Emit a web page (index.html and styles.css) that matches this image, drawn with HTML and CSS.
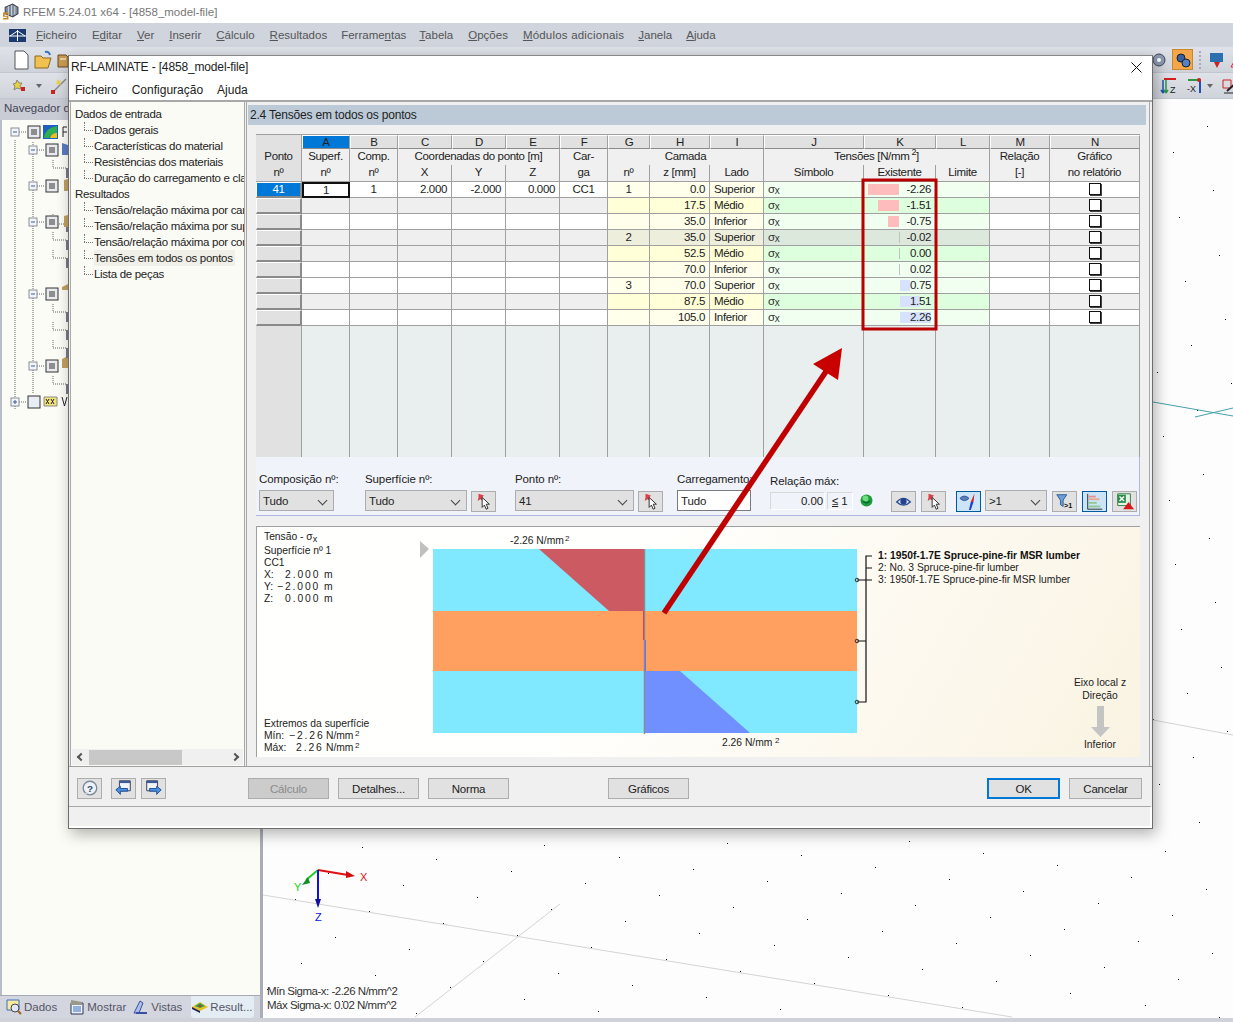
FILE: index.html
```html
<!DOCTYPE html>
<html lang="pt">
<head>
<meta charset="utf-8">
<title>RFEM 5.24.01 x64 - [4858_model-file]</title>
<link rel="stylesheet" href="styles.css">
</head>
<body>
<svg class="defs" width="0" height="0" aria-hidden="true">
  <symbol id="i-pick" viewBox="0 0 25 21">
    <path d="M7 2l6 2-2 2 1 4-3-2-3 2 1-4z" fill="#d8404a"/>
    <path d="M11 6v11l2.500-2.500 2 4.500 2-1-2-4.500h3.500z" fill="#fff" stroke="#222"/>
  </symbol>
  <symbol id="i-eye" viewBox="0 0 25 21">
    <path d="M5 11q7.500-8 15 0q-7.500 7-15 0z" fill="#dfe8f5" stroke="#2a4a90" stroke-width="1.500"/>
    <circle cx="12.500" cy="10.500" r="3.500" fill="#24408e"/>
  </symbol>
  <symbol id="i-eyebar" viewBox="0 0 25 21">
    <path d="M3 7q5-5 10 0q-5 5-10 0z" fill="#5c7fb8" stroke="#2a4a90"/>
    <path d="M19 2l-4 9h3z" fill="#d02020"/><path d="M15 11h3l-3 9-2 0z" fill="#2040d0"/>
  </symbol>
  <symbol id="i-filter" viewBox="0 0 25 21">
    <path d="M4 3h11l-4 6v7l-3-2v-5z" fill="#6aa0d8" stroke="#2a5a90"/>
    <text x="12" y="18" class="svg-mini">&gt;1</text>
  </symbol>
  <symbol id="i-bars" viewBox="0 0 25 21">
    <path d="M5 2v17h16" fill="none" stroke="#222"/>
    <path d="M6 4h8v2H6z" fill="#e89090"/><path d="M6 7h12v2H6z" fill="#e8a890"/><path d="M6 11h9v2H6z" fill="#90c890"/><path d="M6 15h13v2H6z" fill="#90c890"/>
  </symbol>
  <symbol id="i-excel" viewBox="0 0 25 21">
    <path d="M5 2h14v13H5z" fill="#e8f3e8" stroke="#2a7a3a"/>
    <path d="M5 3h9v9H5z" fill="#2a8a4a"/><path d="M7 5l5 5M12 5l-5 5" stroke="#fff" stroke-width="1.500"/>
    <path d="M17 11l6 8H11z" fill="#d81818"/>
  </symbol>
  <symbol id="i-help" viewBox="0 0 25 21">
    <circle cx="13" cy="10" r="7.500" fill="#eef2f6" stroke="#7a8a9a" stroke-width="1.500"/>
    <path d="M6 18l3-4 2 2z" fill="#c8d0d8"/>
    <text x="13" y="14" class="svg-q">?</text>
  </symbol>
  <symbol id="i-prev" viewBox="0 0 25 21">
    <path d="M8 2h12v11H8z" fill="#f0f4fa" stroke="#334"/><path d="M8 2h12v2.500H8z" fill="#3a5a98"/>
    <path d="M4 12l5-4v2.500h8v3H9V17z" fill="#4a90e0" stroke="#1c4a90"/>
  </symbol>
  <symbol id="i-next" viewBox="0 0 25 21">
    <path d="M5 2h12v11H5z" fill="#f0f4fa" stroke="#334"/><path d="M5 2h12v2.500H5z" fill="#3a5a98"/>
    <path d="M21 12l-5-4v2.500H8v3h8V17z" fill="#4a90e0" stroke="#1c4a90"/>
  </symbol>
</svg>

<div class="app">
  <header class="titlebar">
    <svg class="app-icon" viewBox="0 0 16 16"><path d="M3 4l7-3 5 3v6l-5 3-7-3z" fill="#7a8a9a" stroke="#445"/><path d="M6 3v9M9 2v10M12 3v8" stroke="#c8d0d8"/><path d="M1 9h5v1.500H2.500v1.500H6v3.500H1V14h3.500v-1H1z" fill="#c8861c"/></svg>
    <span>RFEM 5.24.01 x64 - [4858_model-file]</span>
  </header>

  <nav class="menubar">
    <svg class="app-logo" viewBox="0 0 17 13"><path d="M0 0h17v13H0z" fill="#1c3a6e"/><path d="M0 7h17M8.500 1v11M1 7l7.500-5L16 7" stroke="#fff" fill="none"/></svg>
    <span><u>F</u>icheiro</span>
    <span>E<u>d</u>itar</span>
    <span><u>V</u>er</span>
    <span><u>I</u>nserir</span>
    <span><u>C</u>álculo</span>
    <span class="mr14"><u>R</u>esultados</span>
    <span class="mr13">Ferrame<u>n</u>tas</span>
    <span><u>T</u>abela</span>
    <span><u>O</u>pções</span>
    <span class="mr14 wider"><u>M</u>ódulos adicionais</span>
    <span class="mr14"><u>J</u>anela</span>
    <span><u>A</u>juda</span>
  </nav>

  <div class="toolbar">
    <svg class="tb-icon" viewBox="0 0 18 20"><path d="M3 1h9l4 4v14H3z" fill="#fff" stroke="#555"/></svg>
    <svg class="tb-icon" viewBox="0 0 18 20"><path d="M1 6h6l2 2h8l-3 10H1z" fill="#f0c050" stroke="#8a6a20"/><path d="M11 2q4-1 5 3" fill="none" stroke="#3a70c0" stroke-width="2"/></svg>
    <svg class="tb-icon" viewBox="0 0 18 20"><path d="M2 5h8l2 2v10H2z" fill="#c89a50" stroke="#6a4a20"/><path d="M4 9h6" stroke="#fff"/></svg>
    <span class="spacer"></span>
    <svg class="tb-icon" viewBox="0 0 18 20"><circle cx="9" cy="10" r="6" fill="#8a9ab0" stroke="#445"/><circle cx="9" cy="10" r="2" fill="#fff"/></svg>
    <span class="tb-active"><svg class="tb-icon" viewBox="0 0 18 20"><circle cx="7" cy="8" r="4" fill="#3a60a0" stroke="#123"/><circle cx="12" cy="13" r="4" fill="#5a80c0" stroke="#123"/></svg></span>
    <span class="tb-sep"></span>
    <svg class="tb-icon" viewBox="0 0 18 20"><path d="M3 3h13v9H3z" fill="#2a70b0"/><path d="M7 12h6l-3 6z" fill="#d02020"/></svg>
    <svg class="tb-icon last" viewBox="0 0 18 20"><path d="M10 3L2 17h16z" fill="#f4e8e8" stroke="#c03030"/></svg>
  </div>
  <div class="toolbar second">
    <svg class="tb-small" viewBox="0 0 18 18"><path d="M6 3l2 3 3 0-2 3 1 3-4-1-3 2 1-4-2-2 3-1z" fill="#e8d040" stroke="#887"/><path d="M10 10h4v4h-4z" fill="#d02020"/></svg>
    <span class="caret"></span>
    <svg class="tb-small" viewBox="0 0 18 18"><path d="M2 16L16 2" stroke="#888" stroke-width="1.500"/><path d="M1 13h4v4H1z" fill="#d02020"/><path d="M7 2l2 2 2-1-1 3 1 2-3-1-2 1 1-3z" fill="#e8d040"/></svg>
    <span class="spacer"></span>
    <svg class="tb-small near" viewBox="0 0 18 18"><path d="M14 16V3M14 16l-2-3M14 16l2-3" stroke="#2050c0" fill="none" stroke-width="1.500"/></svg>
    <svg class="tb-small gap7" viewBox="0 0 18 18"><path d="M4 16V3M4 16l-2-3M4 16l2-3" stroke="#2a9a40" fill="none" stroke-width="1.500"/><path d="M2 2h12" stroke="#d02020" stroke-width="2"/><text x="8" y="16" class="svg-axis">Z</text></svg>
    <svg class="tb-small gap0" viewBox="0 0 18 18"><path d="M1 3h13" stroke="#2a9a40" stroke-width="2"/><path d="M13 3v13" stroke="#2050c0" stroke-width="2"/><circle cx="12" cy="3" r="2" fill="#d02020"/><text x="0" y="15" class="svg-axis">-X</text></svg>
    <span class="caret"></span>
    <svg class="tb-small last" viewBox="0 0 18 18"><path d="M2 3h8v8H2z" fill="none" stroke="#d02020"/><path d="M6 14L16 5" stroke="#222" stroke-width="2"/><path d="M3 16h13" stroke="#222"/></svg>
  </div>

  <main class="workspace">
    <aside class="navigator">
      <div class="nav-title">Navegador de dados</div>
      <svg class="nav-tree" viewBox="0 0 68 300">
        <g class="dots">
          <path d="M15 18v270M33 20v252M53 38v8h13M53 92v10h13M53 110v8h13M53 128v8h13M53 182v8h13M53 200v8h13M53 218v8h13M53 254v8h13"/>
          <path d="M19 10h8M37 28h8M37 64h8M37 100h8M37 172h8M37 244h8M19 280h8"/>
        </g>
        <g class="boxes">
          <rect x="11" y="6" width="8" height="8"/><rect x="29" y="24" width="8" height="8"/><rect x="29" y="60" width="8" height="8"/><rect x="29" y="96" width="8" height="8"/><rect x="29" y="168" width="8" height="8"/><rect x="29" y="240" width="8" height="8"/><rect x="11" y="276" width="8" height="8"/>
        </g>
        <path class="minus" d="M13 10h4M31 28h4M31 64h4M31 100h4M31 172h4M31 244h4M13 280h4M15 278v4"/>
        <g class="checks">
          <rect x="28" y="4" width="12" height="12"/><rect x="46" y="22" width="12" height="12"/><rect x="46" y="58" width="12" height="12"/><rect x="46" y="94" width="12" height="12"/><rect x="46" y="166" width="12" height="12"/><rect x="46" y="238" width="12" height="12"/>
        </g>
        <g class="check-fill">
          <rect x="31" y="7" width="6" height="6"/><rect x="49" y="25" width="6" height="6"/><rect x="49" y="61" width="6" height="6"/><rect x="49" y="97" width="6" height="6"/><rect x="49" y="169" width="6" height="6"/><rect x="49" y="241" width="6" height="6"/>
        </g>
        <rect class="check-empty" x="28" y="274" width="12" height="12"/>
        <rect x="43" y="3" width="15" height="14" fill="#1f5fc0"/><path d="M44 16q1-10 13-12v7q-6 0-8 5z" fill="#2fb050"/><path d="M50 16q1-5 7-5v5z" fill="#e8c020"/>
        <path d="M44 275h13v9H44z" fill="#f2e47a" stroke="#888"/>
        <path d="M46 277l3 5M49 277l-3 5M51 277l3 5M54 277l-3 5" stroke="#222" fill="none"/>
        <path d="M62 165l6-3v6h-6zM62 237l6-3v12h-6z" fill="#c0a060"/>
        <path d="M62 21l6 2v10h-6z" fill="#5a7ac0"/>
        <path d="M66 46h2v10h-2zM66 100h2v10h-2zM66 118h2v10h-2zM66 136h2v10h-2zM66 190h2v10h-2zM66 208h2v10h-2zM66 226h2v10h-2zM66 262h2v10h-2z" fill="#778"/>
        <path d="M64 58l4-1v12h-4zM64 94l4-1v12h-4z" fill="#c0a060"/>
        <path d="M63 5v10M63 5h4M63 10h4" stroke="#223" fill="none"/>
        <path d="M62 275l2.500 9 2.500-9" stroke="#223" fill="none"/>
      </svg>
      <div class="nav-tabs">
        <span class="tab"><svg class="tab-icon" viewBox="0 0 16 16"><path d="M1 1h12v10H1z" fill="#f8e8a0" stroke="#3a70c0"/><circle cx="9" cy="9" r="4" fill="#dfe8f5" stroke="#444"/><path d="M12 12l3 3" stroke="#a06020" stroke-width="2"/></svg>Dados</span>
        <span class="tab ml12"><svg class="tab-icon" viewBox="0 0 16 16"><path d="M2 4h12v11H2z" fill="#e8f0fa" stroke="#335"/><path d="M2 1l11 2v3H2z" fill="#998"/><path d="M4 8h8M4 10h8M4 12h8" stroke="#3a70c0"/></svg>Mostrar</span>
        <span class="tab ml7"><svg class="tab-icon" viewBox="0 0 16 16"><path d="M1 14l6-12 3 2-4 10z" fill="#aac0e8" stroke="#3a50a0"/><path d="M3 14h11" stroke="#3a50a0" stroke-width="2"/></svg>Vistas</span>
        <span class="tab active ml9"><svg class="tab-icon" viewBox="0 0 16 16"><path d="M0 8l8-5 8 5-8 4z" fill="#e8c020"/><path d="M3 7l5-3 5 3-5 2z" fill="#2fa050"/><path d="M6 7l2-1 2 1-2 1z" fill="#d02020"/><path d="M0 8l8 4v2L0 10z" fill="#225"/></svg>Result...</span>
      </div>
    </aside>
    <div class="splitter"></div>
    <div class="canvas">
      <svg class="scene" viewBox="263 99 970 919">
        <rect x="263" y="99" width="970" height="919" fill="#fdfdfd"/>
        <g id="lattice-dots"></g>
        <path class="gridline" d="M263 895L1012 1017M1153 720L1233 735M415 1017L560 904"/>
        <path class="tealline" d="M1153 402L1233 416M1195 417L1233 408"/>
        <path d="M318 870L348 875" stroke="#e01010" stroke-width="2"/><path d="M346 871l9 5-9 2z" fill="#d01010"/>
        <path d="M318 870L306 880" stroke="#20d020" stroke-width="2"/><path d="M308 877l-6 8 8-2z" fill="#109020"/>
        <path d="M318 870V902" stroke="#1010e0" stroke-width="2"/><path d="M315 899h6l-3 9z" fill="#1010a0"/>
        <text x="360" y="881" class="axis ax-x">X</text>
        <text x="294" y="891" class="axis ax-y">Y</text>
        <text x="315" y="921" class="axis ax-z">Z</text>
        <text x="267" y="995" class="scene-note">Mín Sigma-x: -2.26 N/mm^2</text>
        <text x="267" y="1009" class="scene-note">Máx Sigma-x: 0.02 N/mm^2</text>
      </svg>
    </div>
  </main>
  <div class="app-foot"></div>

  <section class="dialog">
    <div class="dlg-title">
      <span>RF-LAMINATE - [4858_model-file]</span>
      <svg class="dlg-close" viewBox="0 0 11 11"><path d="M0.500 0.500l10 10M10.500 0.500l-10 10" stroke="#111" fill="none"/></svg>
    </div>
    <div class="dlg-menu"><span>Ficheiro</span><span>Configuração</span><span>Ajuda</span></div>
    <div class="dlg-body">
      <div class="dlg-tree">
        <div class="tree-list">
          <div class="t-root">Dados de entrada</div>
          <div class="t-item">Dados gerais</div>
          <div class="t-item">Características do material</div>
          <div class="t-item">Resistências dos materiais</div>
          <div class="t-item">Duração do carregamento e classe de serviço</div>
          <div class="t-root">Resultados</div>
          <div class="t-item">Tensão/relação máxima por carregamento</div>
          <div class="t-item">Tensão/relação máxima por superfície</div>
          <div class="t-item">Tensão/relação máxima por composição</div>
          <div class="t-item selected"><span>Tensões em todos os pontos</span></div>
          <div class="t-item">Lista de peças</div>
        </div>
        <div class="hscroll"><span class="arrow-l"></span><span class="thumb"></span><span class="arrow-r"></span></div>
      </div>

      <div class="dlg-main">
        <h2 class="band">2.4 Tensões em todos os pontos</h2>
        <table class="grid">
          <colgroup>
            <col class="c46"><col class="c48"><col class="c48"><col class="c54"><col class="c54"><col class="c54"><col class="c48"><col class="c42"><col class="c60"><col class="c54"><col class="c100"><col class="c72"><col class="c54"><col class="c60"><col class="c90">
          </colgroup>
          <thead>
            <tr class="letters">
              <th rowspan="3" class="ponto">Ponto<br>nº</th>
              <th class="sel">A</th><th>B</th><th>C</th><th>D</th><th>E</th><th>F</th><th>G</th><th>H</th><th>I</th><th>J</th><th>K</th><th>L</th><th>M</th><th>N</th>
            </tr>
            <tr class="h1">
              <th class="nb">Superf.</th><th class="nb">Comp.</th><th colspan="3" class="nb">Coordenadas do ponto [m]</th><th class="nb">Car-</th><th colspan="3" class="nb">Camada</th><th colspan="3" class="nb">Tensões [N/mm<sup>2</sup>]</th><th class="nb">Relação</th><th class="nb">Gráfico</th>
            </tr>
            <tr class="h2">
              <th>nº</th><th>nº</th><th>X</th><th>Y</th><th>Z</th><th>ga</th><th>nº</th><th>z [mm]</th><th>Lado</th><th>Símbolo</th><th>Existente</th><th>Limite</th><th>[-]</th><th>no relatório</th>
            </tr>
          </thead>
          <tbody>
            <tr class="w">
              <td class="rh sel">41</td><td class="ctr focus">1</td><td class="ctr">1</td><td class="num">2.000</td><td class="num">-2.000</td><td class="num">0.000</td><td class="ctr">CC1</td>
              <td class="y ctr">1</td><td class="y num">0.0</td><td class="y lft">Superior</td><td class="g sig">σ<sub>x</sub></td>
              <td class="g num bar"><i class="neg" style="width:31px"></i><span>-2.26</span></td><td class="g"></td><td></td><td class="ctr"><b class="chk"></b></td>
            </tr>
            <tr class="d">
              <td class="rh"></td><td></td><td></td><td></td><td></td><td></td><td></td>
              <td class="y"></td><td class="y num">17.5</td><td class="y lft">Médio</td><td class="g sig">σ<sub>x</sub></td>
              <td class="g num bar"><i class="neg" style="width:21px"></i><span>-1.51</span></td><td class="g"></td><td></td><td class="ctr"><b class="chk"></b></td>
            </tr>
            <tr class="w">
              <td class="rh"></td><td></td><td></td><td></td><td></td><td></td><td></td>
              <td class="y"></td><td class="y num">35.0</td><td class="y lft">Inferior</td><td class="g sig">σ<sub>x</sub></td>
              <td class="g num bar"><i class="neg" style="width:11px"></i><span>-0.75</span></td><td class="g"></td><td></td><td class="ctr"><b class="chk"></b></td>
            </tr>
            <tr class="e">
              <td class="rh"></td><td></td><td></td><td></td><td></td><td></td><td></td>
              <td class="y ctr">2</td><td class="y num">35.0</td><td class="y lft">Superior</td><td class="g sig">σ<sub>x</sub></td>
              <td class="g num bar"><i class="zero" style="width:1px"></i><span>-0.02</span></td><td class="g"></td><td></td><td class="ctr"><b class="chk"></b></td>
            </tr>
            <tr class="d">
              <td class="rh"></td><td></td><td></td><td></td><td></td><td></td><td></td>
              <td class="y"></td><td class="y num">52.5</td><td class="y lft">Médio</td><td class="g sig">σ<sub>x</sub></td>
              <td class="g num bar"><i class="zero" style="width:1px"></i><span>0.00</span></td><td class="g"></td><td></td><td class="ctr"><b class="chk"></b></td>
            </tr>
            <tr class="w">
              <td class="rh"></td><td></td><td></td><td></td><td></td><td></td><td></td>
              <td class="y"></td><td class="y num">70.0</td><td class="y lft">Inferior</td><td class="g sig">σ<sub>x</sub></td>
              <td class="g num bar"><i class="zero" style="width:1px"></i><span>0.02</span></td><td class="g"></td><td></td><td class="ctr"><b class="chk"></b></td>
            </tr>
            <tr class="w">
              <td class="rh"></td><td></td><td></td><td></td><td></td><td></td><td></td>
              <td class="y ctr">3</td><td class="y num">70.0</td><td class="y lft">Superior</td><td class="g sig">σ<sub>x</sub></td>
              <td class="g num bar"><i class="pos" style="width:10px"></i><span>0.75</span></td><td class="g"></td><td></td><td class="ctr"><b class="chk"></b></td>
            </tr>
            <tr class="d">
              <td class="rh"></td><td></td><td></td><td></td><td></td><td></td><td></td>
              <td class="y"></td><td class="y num">87.5</td><td class="y lft">Médio</td><td class="g sig">σ<sub>x</sub></td>
              <td class="g num bar"><i class="pos" style="width:20px"></i><span>1.51</span></td><td class="g"></td><td></td><td class="ctr"><b class="chk"></b></td>
            </tr>
            <tr class="w">
              <td class="rh"></td><td></td><td></td><td></td><td></td><td></td><td></td>
              <td class="y"></td><td class="y num">105.0</td><td class="y lft">Inferior</td><td class="g sig">σ<sub>x</sub></td>
              <td class="g num bar"><i class="pos" style="width:31px"></i><span>2.26</span></td><td class="g"></td><td></td><td class="ctr"><b class="chk"></b></td>
            </tr>
            <tr class="filler">
              <td class="fh"></td><td></td><td></td><td></td><td></td><td></td><td></td><td></td><td></td><td></td><td></td><td></td><td></td><td></td><td></td>
            </tr>
          </tbody>
        </table>

        <div class="controls">
          <div class="ctl w75"><label>Composição nº:</label><div class="sel-box">Tudo</div></div>
          <div class="ctl w102 ml31"><label>Superfície nº:</label><div class="sel-box">Tudo</div></div>
          <button class="icon-btn low ml4"><svg><use href="#i-pick"/></svg></button>
          <div class="ctl w119 ml19"><label>Ponto nº:</label><div class="sel-box">41</div></div>
          <button class="icon-btn low ml4"><svg><use href="#i-pick"/></svg></button>
          <div class="ctl w74 ml14"><label>Carregamento:</label><div class="sel-box white">Tudo</div></div>
          <div class="ctl w84 ml19"><label>Relação máx:</label><div class="ratio"><span class="r-val">0.00</span><span class="r-lim"><u>≤</u> 1</span></div></div>
          <svg class="smile" viewBox="0 0 13 13"><circle cx="6.500" cy="6.500" r="6" fill="#1f9a3c"/><circle cx="5.500" cy="4.500" r="3" fill="#6fdc80"/><path d="M3 7q3.500 3.500 7 0" fill="none" stroke="#063" stroke-width="1.200"/></svg>
          <button class="icon-btn low ml18"><svg><use href="#i-eye"/></svg></button>
          <button class="icon-btn low ml5"><svg><use href="#i-pick"/></svg></button>
          <button class="icon-btn low on ml10"><svg><use href="#i-eyebar"/></svg></button>
          <div class="sel-box w62 ml4">&gt;1</div>
          <button class="icon-btn low ml5"><svg><use href="#i-filter"/></svg></button>
          <button class="icon-btn low on ml5"><svg><use href="#i-bars"/></svg></button>
          <button class="icon-btn low ml5"><svg><use href="#i-excel"/></svg></button>
        </div>

        <div class="graphic">
          <svg class="gr-svg" viewBox="256 526 884 231">
            <g class="gr-text">
              <text x="264" y="540">Tensão - σ<tspan dy="2" class="gr-sub">x</tspan></text>
              <text x="264" y="554">Superfície nº 1</text>
              <text x="264" y="566">CC1</text>
              <text x="264" y="578">X:</text><text x="285" y="578" class="mono">2.000</text><text x="324" y="578">m</text>
              <text x="264" y="590">Y:</text><text x="277" y="590" class="mono">−2.000</text><text x="324" y="590">m</text>
              <text x="264" y="602">Z:</text><text x="285" y="602" class="mono">0.000</text><text x="324" y="602">m</text>
              <text x="264" y="727">Extremos da superfície</text>
              <text x="264" y="739">Mín:</text><text x="289" y="739" class="mono">−2.26</text><text x="326" y="739">N/mm</text><text x="355" y="736" class="gr-sup">2</text>
              <text x="264" y="751">Máx:</text><text x="296" y="751" class="mono">2.26</text><text x="326" y="751">N/mm</text><text x="355" y="748" class="gr-sup">2</text>
            </g>
            <path d="M420 541l9 8-9 9z" fill="#c0c0c0"/>
            <rect x="433" y="549" width="424" height="62" fill="#80e8ff"/>
            <rect x="433" y="611" width="424" height="60" fill="#ffa060"/>
            <rect x="433" y="671" width="424" height="62" fill="#80e8ff"/>
            <path d="M539 549H644V611H609z" fill="#cc5a62"/>
            <path d="M645 671H680L750 733H645z" fill="#7090ff"/>
            <path d="M644.500 549V734" stroke="#8a8a90" stroke-width="1.500"/>
            <path d="M643.500 611V640" stroke="#d04848"/><path d="M645.500 640V671" stroke="#6a70f0"/>
            <g class="gr-text">
              <text x="510" y="544">-2.26 N/mm</text><text x="565" y="541" class="gr-sup">2</text>
              <text x="722" y="746">2.26 N/mm</text><text x="775" y="743" class="gr-sup">2</text>
              <text x="878" y="559" class="strong">1: 1950f-1.7E Spruce-pine-fir MSR lumber</text>
              <text x="878" y="571">2: No. 3 Spruce-pine-fir lumber</text>
              <text x="878" y="583">3: 1950f-1.7E Spruce-pine-fir MSR lumber</text>
              <text x="1100" y="686" class="mid">Eixo local z</text>
              <text x="1100" y="699" class="mid">Direção</text>
              <text x="1100" y="748" class="mid">Inferior</text>
            </g>
            <path d="M872 556h-6v146h-9M866 568h6M857 580h15M857 641h9" fill="none" stroke="#111" stroke-width="1.200"/>
            <g fill="none" stroke="#333"><circle cx="857" cy="580" r="1.800"/><circle cx="857" cy="641" r="1.800"/><circle cx="857" cy="702" r="1.800"/></g>
            <path d="M1097 706h7v21h6l-9.500 10-9.500-10h6z" fill="#c4c4c4"/>
          </svg>
        </div>
      </div>
    </div>

    <div class="dlg-buttons">
      <button class="icon-btn"><svg><use href="#i-help"/></svg></button>
      <button class="icon-btn ml9"><svg><use href="#i-prev"/></svg></button>
      <button class="icon-btn ml5"><svg><use href="#i-next"/></svg></button>
      <button class="btn disabled ml82">Cálculo</button>
      <button class="btn ml9">Detalhes...</button>
      <button class="btn ml9">Norma</button>
      <button class="btn ml99">Gráficos</button>
      <button class="btn wide default ml-auto">OK</button>
      <button class="btn wide ml9">Cancelar</button>
    </div>
    <div class="dlg-status"></div>
  </section>

  <svg class="annot" viewBox="0 0 1233 1022" aria-hidden="true">
    <rect x="863" y="180" width="73" height="149" fill="none" stroke="#b80000" stroke-width="3"/>
    <path d="M664 613L827 370" stroke="#c00000" stroke-width="5.500"/>
    <path d="M842 348L813 364L838 380z" fill="#c80000"/>
  </svg>
</div>
<script src="script.js"></script>
</body>
</html>
```
FILE: styles.css
```css
* { box-sizing: border-box; }
html, body { margin: 0; padding: 0; }
body { width: 1233px; height: 1022px; overflow: hidden; background: #fff; font: 11.500px "Liberation Sans", Arial, sans-serif; color: #222; }
.defs { position: absolute; }
.app { position: relative; width: 1233px; height: 1022px; display: flex; flex-direction: column; overflow: hidden; }

.titlebar { height: 23px; background: #fff; display: flex; align-items: center; padding-left: 2px; gap: 4px; color: #777; }
.app-icon { width: 17px; height: 17px; }

.menubar { height: 24px; background: #cfd4dd; display: flex; align-items: center; padding-left: 9px; color: #555; }
.app-logo { width: 17px; height: 13px; margin-right: 10px; }
.menubar span { margin-right: 15px; white-space: nowrap; }
.menubar span.mr14 { margin-right: 14px; }
.menubar span.mr13 { margin-right: 13px; }
.menubar span.wider { letter-spacing: .2px; }

.toolbar { height: 26px; background: linear-gradient(#dfe2e8, #cfd3da); border-bottom: 1px solid #c2c6ce; display: flex; align-items: center; padding-left: 12px; overflow: hidden; }
.tb-icon { width: 18px; height: 20px; margin-right: 4px; flex: none; }
.tb-icon.last { margin-right: -14px; }
.spacer { flex: 1; }
.tb-active { width: 21px; height: 21px; background: #f4a64a; border: 1px solid #c8882c; display: flex; align-items: center; justify-content: center; margin-right: 6px; flex: none; }
.tb-active .tb-icon { margin: 0; }
.tb-sep { width: 0; height: 18px; border-left: 2px dotted #aab; margin-right: 6px; flex: none; }
.tb-small { width: 18px; height: 18px; margin-right: 5px; flex: none; }
.tb-small.last { margin-right: -6px; }
.tb-small.near { margin-right: -5px; }
.tb-small.gap7 { margin-right: 7px; }
.tb-small.gap0 { margin-right: 0; }
.caret { width: 0; height: 0; border: 3px solid transparent; border-top: 4px solid #666; border-bottom: 0; margin-right: 8px; margin-left: 2px; flex: none; }
.second { padding-left: 11px; }

.workspace { flex: 1; display: flex; min-height: 0; }
.navigator { width: 260px; display: flex; flex-direction: column; background: #fcfcf6; border-left: 2px solid #b8bcc8; }
.nav-title { height: 21px; background: #c9ccd5; color: #445; padding: 3px 0 0 4px; margin-left: -2px; white-space: nowrap; }
.nav-tree { width: 68px; height: 300px; margin: 2px 0 0 -2px; flex: none; }
.dots path { fill: none; stroke: #666; stroke-dasharray: 1 1; }
.boxes rect { fill: #f2f4f8; stroke: #8a8f98; }
.minus { stroke: #3a5aa0; fill: none; }
.checks rect { fill: #e8eaf0; stroke: #333; }
.check-fill rect { fill: #8e8e8e; }
.check-empty { fill: #e8edf6; stroke: #333; }
.nav-tabs { margin-top: auto; height: 23px; background: #d3d6de; display: flex; align-items: center; padding-left: 6px; color: #556; border-top: 1px solid #a6a9b3; margin-left: -2px; }
.tab { display: flex; align-items: center; gap: 2px; height: 22px; }
.tab.active { background: #e4ecf4; padding: 0 1px; border-radius: 0 0 3px 3px; }
.tab-icon { width: 16px; height: 16px; flex: none; }
.splitter { width: 3px; background: #a9adb6; }
.canvas { flex: 1; min-width: 0; }
.scene { display: block; width: 970px; height: 919px; }
.gridline { stroke: #d4d4d4; stroke-width: 1; fill: none; }
.tealline { stroke: #4aa0a8; stroke-width: 1; fill: none; }
.axis { font: 11px "Liberation Sans", sans-serif; }
.ax-x { fill: #e01010; } .ax-y { fill: #20d020; } .ax-z { fill: #1010e0; }
.scene-note { font: 11.500px "Liberation Sans", sans-serif; fill: #333; letter-spacing: -.5px; }
.app-foot { height: 4px; background: #cfd2d9; }

.dialog { position: absolute; left: 68px; top: 55px; width: 1085px; height: 774px; background: #f0f0f0; border: 1px solid #6e6e6e; border-top-color: #888; box-shadow: 3px 5px 14px rgba(0, 0, 0, .3); display: flex; flex-direction: column; }
.dlg-title { height: 22px; background: #fff; display: flex; align-items: center; justify-content: space-between; padding: 0 10px 0 2px; font-size: 12px; letter-spacing: -.15px; color: #222; flex: none; }
.dlg-close { width: 11px; height: 11px; }
.dlg-menu { height: 24px; background: #fff; border-bottom: 2px solid #a8a8a8; display: flex; align-items: center; gap: 14px; padding: 2px 0 0 6px; font-size: 12px; flex: none; }

.dlg-body { height: 665px; display: flex; flex: none; border-bottom: 1px solid #a0a0a0; }
.dlg-tree { width: 175px; margin-left: 1px; background: #fbfbf5; border: 1px solid #a8a8a8; border-top: 0; border-bottom: 0; display: flex; flex-direction: column; overflow: hidden; flex: none; padding-top: 4px; letter-spacing: -.3px; }
.tree-list { flex: 1; white-space: nowrap; overflow: hidden; }
.t-root, .t-item { height: 16px; line-height: 16px; }
.t-root { padding-left: 4px; }
.t-item { margin-left: 13px; padding-left: 10px; position: relative; }
.t-item::before { content: ""; position: absolute; left: 0; top: 8px; width: 9px; border-top: 1px dotted #777; }
.t-item::after { content: ""; position: absolute; left: 0; top: 0; height: 8px; border-left: 1px dotted #777; }
.t-item.selected span { background: #f0f0e8; display: inline-block; padding-right: 2px; }
.hscroll { height: 16px; background: #f0f0f0; display: flex; align-items: center; margin: 0 1px 1px; flex: none; }
.thumb { width: 93px; height: 15px; background: #c8c8c8; margin-left: 5px; }
.arrow-l, .arrow-r { width: 6px; height: 6px; border-left: 2px solid #555; border-bottom: 2px solid #555; transform: rotate(45deg); margin-left: 6px; }
.arrow-r { transform: rotate(225deg); margin-left: 50px; }

.dlg-main { flex: none; width: 904px; padding: 3px 3px 0 1px; margin-left: 1px; border-left: 1px solid #a8a8a8; border-right: 1px solid #a8a8a8; display: flex; flex-direction: column; }
.band { height: 20px; margin: 0; font-weight: normal; font-size: 12px; letter-spacing: -.2px; line-height: 20px; background: #bccad8; padding-left: 2px; color: #222; flex: none; }
.grid { width: 884px; margin: 9px 0 0 8px; table-layout: fixed; border-collapse: separate; border-spacing: 0; background: #f0f0f0; border-top: 1px solid #a0a0a0; flex: none; letter-spacing: -.35px; }
.c42 { width: 42px; } .c46 { width: 46px; } .c48 { width: 48px; } .c54 { width: 54px; } .c60 { width: 60px; } .c72 { width: 72px; } .c90 { width: 90px; } .c100 { width: 100px; }
.grid th, .grid td { padding: 0; border-right: 1px solid #a0a0a0; border-bottom: 1px solid #a0a0a0; font-weight: normal; text-align: center; overflow: hidden; white-space: nowrap; height: 16px; line-height: 15px; font-size: 11.500px; }
.grid th { color: #222; background: #f0f0f0; }
.letters th { height: 14px; line-height: 12px; background: #e1e1e1; border-left: 1px solid #fff; border-top: 1px solid #fff; border-bottom: 1px solid #8a8a8a; }
.letters th.sel { background: #0078d7; color: #222; }
.grid th.ponto { background: #e1e1e1; vertical-align: bottom; line-height: 16px; padding-bottom: 1px; border-left: 0; border-top: 0; border-bottom: 1px solid #a0a0a0; }
.grid .h1 th { height: 16px; line-height: 13px; padding-bottom: 2px; }
.h1 th.nb { border-bottom: 0; }
.grid .h2 th { height: 17px; line-height: 14px; padding-bottom: 2px; }
.grid sup { font-size: 9px; line-height: 0; margin-left: 2px; }
.w td { background: #fff; }
.d td { background: #efefef; }
.e td { background: #efefef; }
.grid td.rh { background: #e1e1e1; border: 1px solid #fff; border-right: 2px solid #8a8a8a; border-bottom: 2px solid #8a8a8a; line-height: 13px; }
.grid td.rh.sel { background: #0078d7; color: #fff; }
.grid td.focus { border: 2px solid #111; line-height: 12px; }
.num { text-align: right !important; padding-right: 4px !important; }
.lft { text-align: left !important; padding-left: 4px !important; }
.sig { text-align: left !important; padding-left: 4px !important; color: #333; }
.sig sub { font-size: 10px; line-height: 0; vertical-align: -1px; }
.w .y { background: #ffffec; }
.d .y { background: #ffffd8; }
.e .y { background: #eeeedc; }
.w .g { background: #f0fff0; }
.d .g { background: #ddffdd; }
.e .g { background: #dde8dd; }
.bar { position: relative; }
.bar span { position: relative; }
.bar i { position: absolute; top: 2px; bottom: 2px; }
.bar .neg { right: 36px; background: #ffbcbc; }
.bar .pos { left: 36px; background: #d6e2ff; }
.bar .zero { left: 35px; background: #bcc4bc; }
.chk { display: inline-block; width: 12px; height: 12px; border: 1.500px solid #111; background: #fff; box-shadow: 1px 1px 0 #444; vertical-align: -2px; }
.filler td { height: 131px; background: #e9eeee; border-bottom: 0; }
.filler td.fh { background: #e1e1e1; }

.controls { width: 884px; height: 59px; margin-left: 8px; background: #f0f3fa; border-right: 1px solid #b0b8e0; border-bottom: 1px solid #b0b8e0; display: flex; align-items: flex-end; padding: 0 0 4px 3px; flex: none; letter-spacing: -.1px; }
.ctl { display: flex; flex-direction: column; flex: none; }
.ctl label { height: 20px; line-height: 18px; white-space: nowrap; }
.w75 { width: 75px; } .w102 { width: 102px; } .w119 { width: 119px; } .w74 { width: 74px; } .w84 { width: 84px; }
.sel-box { height: 21px; line-height: 20px; background: #e1e1e1; border: 1px solid #adadad; padding-left: 3px; position: relative; flex: none; }
.sel-box::after { content: ""; position: absolute; right: 7px; top: 6px; width: 6px; height: 6px; border-right: 1px solid #444; border-bottom: 1px solid #444; transform: rotate(45deg); }
.sel-box.white { background: #fff; border-color: #7a7a7a; }
.sel-box.white::after { display: none; }
.sel-box.w62 { width: 62px; flex: none; }
.ml4 { margin-left: 4px; } .ml5 { margin-left: 5px; } .ml7 { margin-left: 7px; } .ml9 { margin-left: 9px; } .ml10 { margin-left: 10px; } .ml12 { margin-left: 12px; } .ml14 { margin-left: 14px; } .ml18 { margin-left: 18px; } .ml19 { margin-left: 19px; } .ml31 { margin-left: 31px; } .ml82 { margin-left: 82px; } .ml99 { margin-left: 99px; } .ml-auto { margin-left: auto; }
.ratio { display: flex; height: 18px; gap: 2px; margin-bottom: 1px; }
.r-val { width: 55px; background: #f0f3fa; border: 1px solid #d8d8d8; border-right-color: #fff; border-bottom-color: #fff; text-align: right; padding-right: 1px; line-height: 16px; }
.r-lim { width: 26px; border: 1px solid #d8d8d8; border-right-color: #fff; border-bottom-color: #fff; padding-left: 4px; line-height: 16px; }
.smile { width: 13px; height: 13px; margin: 0 0 4px 6px; flex: none; }
.icon-btn { width: 25px; height: 21px; padding: 0; background: #e1e1e1; border: 1px solid #adadad; flex: none; display: block; }
.icon-btn.low { margin-bottom: -1px; }
.icon-btn svg { display: block; width: 23px; height: 19px; }
.icon-btn.on { background: #cce4f7; border: 1.500px solid #005a9e; }
.svg-mini { font: bold 8px "Liberation Sans", sans-serif; fill: #111; }
.svg-q { font: bold 11px "Liberation Sans", sans-serif; fill: #2a4a6a; text-anchor: middle; }
.svg-axis { font: 9px "Liberation Sans", sans-serif; fill: #222; }

.graphic { width: 884px; height: 231px; margin: 10px 0 0 8px; background: linear-gradient(120deg, #fffffd 40%, #faf3e2); box-shadow: inset 1px 1px 0 #a0a0a0; flex: none; }
.gr-svg { display: block; width: 884px; height: 231px; }
.gr-text text { font: 10.300px "Liberation Sans", sans-serif; fill: #222; }
.gr-text .mono { letter-spacing: 1.900px; }
.gr-text .strong { font-weight: bold; fill: #111; }
.gr-text .mid { text-anchor: middle; }
.gr-text .gr-sup { font-size: 8px; }
.gr-sub { font-size: 9px; }

.dlg-buttons { height: 39px; display: flex; align-items: center; padding: 4px 10px 0 8px; flex: none; }
.btn { width: 81px; height: 21px; padding: 0; background: #e1e1e1; border: 1px solid #adadad; font: 11.500px "Liberation Sans", sans-serif; letter-spacing: -.2px; color: #222; flex: none; }
.btn.wide { width: 73px; }
.btn.disabled { background: #cccccc; color: #8a8a8a; }
.btn.default { border: 2px solid #0078d7; }
.dlg-status { flex: 1; border-top: 1px solid #a8a8a8; border-bottom: 2px solid #fff; border-right: 2px solid #fff; }

.annot { position: absolute; left: 0; top: 0; width: 1233px; height: 1022px; pointer-events: none; }
.dot { fill: #000; shape-rendering: crispEdges; }
```
FILE: script.js
```js
// Scatter the model's grid points on the 3D canvas as a skewed lattice.
(function () {
  var group = document.getElementById('lattice-dots');
  var NS = 'http://www.w3.org/2000/svg';
  function lattice(ax, ay, a, b, c, d) {
    for (var m = -30; m <= 30; m++) {
      for (var n = -45; n <= 45; n++) {
        var x = Math.round(ax + a * m + c * n);
        var y = Math.round(ay + b * m + d * n);
        var inRight = x > 1152 && x < 1233 && y > 100 && y < 840;
        var inBottom = x > 263 && x < 1233 && y >= 840 && y < 1018;
        if ((ay > 500 && inBottom) || (ay <= 500 && inRight)) {
          var dot = document.createElementNS(NS, 'rect');
          dot.setAttribute('x', x);
          dot.setAttribute('y', y);
          dot.setAttribute('width', 1);
          dot.setAttribute('height', 1);
          dot.setAttribute('class', 'dot');
          group.appendChild(dot);
        }
      }
    }
  }
  lattice(983, 853, 40.4, 38, -33.8, 26);
  lattice(1207, 126, 40, 38, -34, 26.3);
})();
```
